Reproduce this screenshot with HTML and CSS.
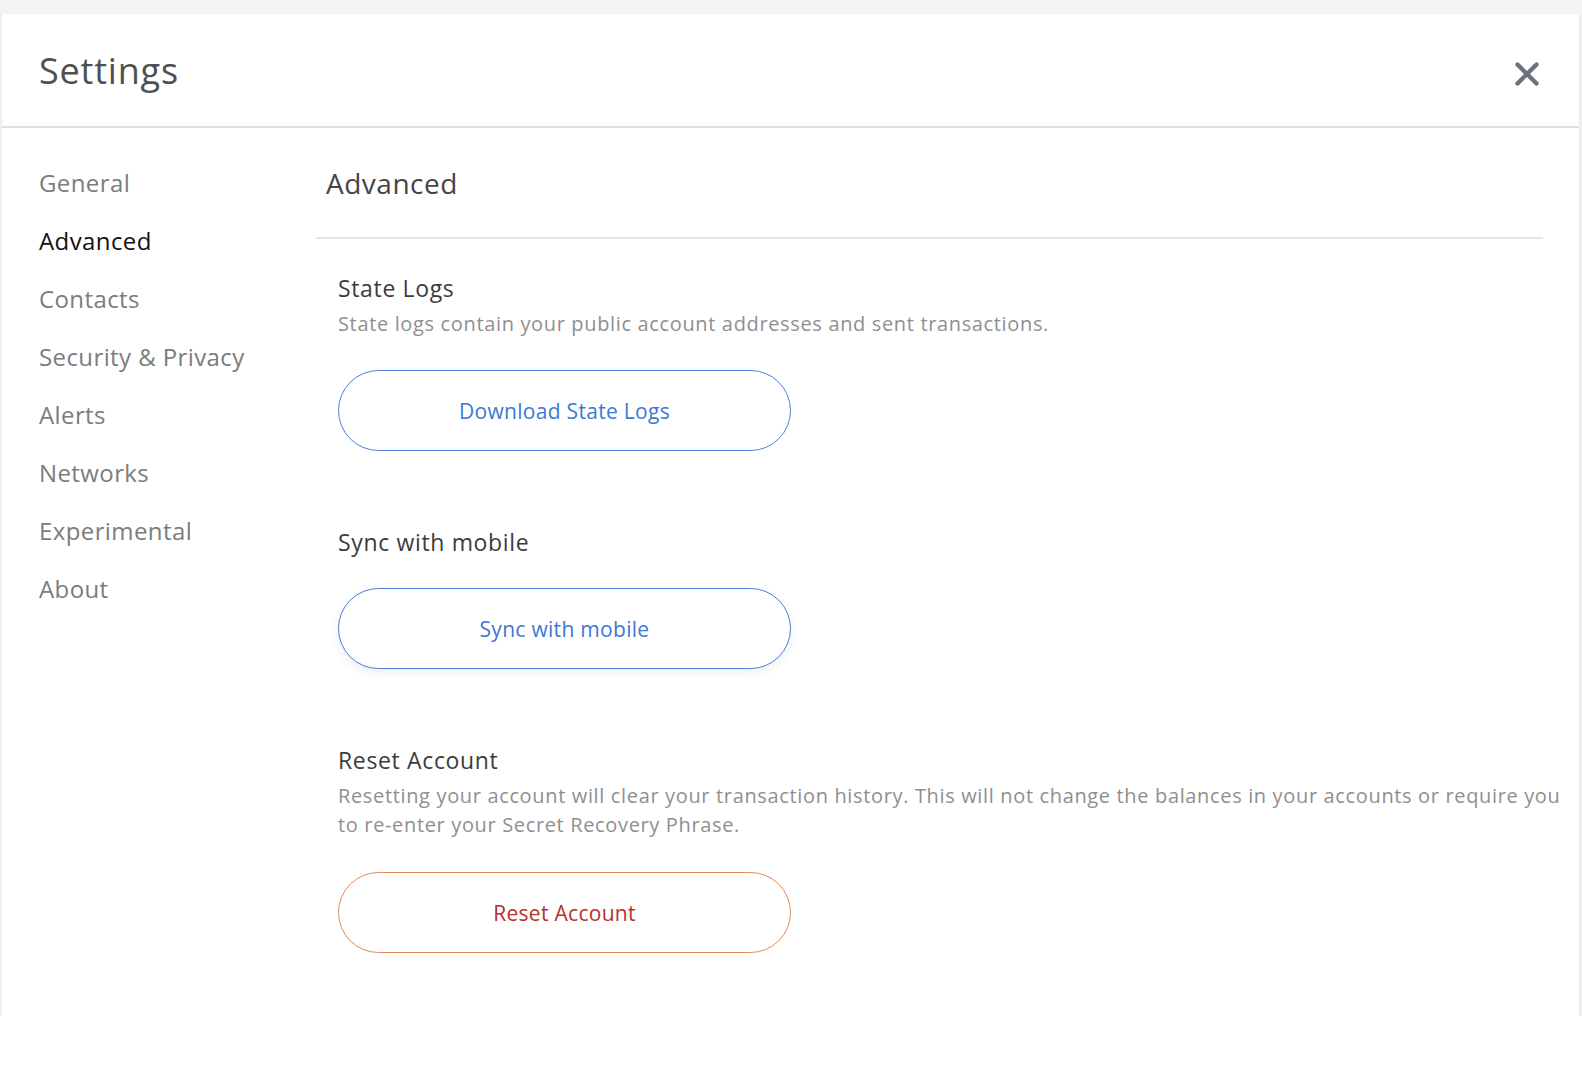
FILE: index.html
```html
<!DOCTYPE html>
<html lang="en">
<head>
<meta charset="utf-8">
<title>Settings</title>
<link rel="stylesheet" href="styles.css">
</head>
<body>
<div class="topband"></div>
<div class="modal">
  <header class="header">
    <h1 class="title">Settings</h1>
    <button class="close" aria-label="Close">
      <svg width="26" height="26" viewBox="0 0 26 26"><path d="M3.5 3.5L22.5 22.5M22.5 3.5L3.5 22.5" stroke="#6a737d" stroke-width="4.4" stroke-linecap="round"/></svg>
    </button>
  </header>
  <div class="main">
    <nav class="sidebar">
      <div class="nav-item">General</div>
      <div class="nav-item active">Advanced</div>
      <div class="nav-item">Contacts</div>
      <div class="nav-item">Security &amp; Privacy</div>
      <div class="nav-item">Alerts</div>
      <div class="nav-item">Networks</div>
      <div class="nav-item">Experimental</div>
      <div class="nav-item">About</div>
    </nav>
    <section class="content">
      <h2 class="content-title">Advanced</h2>
      <div class="divider"></div>
      <div class="section first">
        <div class="sec-title">State Logs</div>
        <div class="sec-desc">State logs contain your public account addresses and sent transactions.</div>
        <button class="btn btn-blue">Download State Logs</button>
      </div>
      <div class="section">
        <div class="sec-title">Sync with mobile</div>
        <button class="btn btn-blue btn-shadow btn-gap">Sync with mobile</button>
      </div>
      <div class="section">
        <div class="sec-title">Reset Account</div>
        <div class="sec-desc">Resetting your account will clear your transaction history. This will not change the balances in your accounts or require you to re-enter your Secret Recovery Phrase.</div>
        <button class="btn btn-red">Reset Account</button>
      </div>
    </section>
  </div>
</div>
</body>
</html>
```
FILE: styles.css
```css
* { box-sizing: border-box; }
html, body { margin: 0; padding: 0; background: #ffffff; }
body { font-family: "Open Sans", Lato, sans-serif; }

.topband { height: 14px; background: #f2f3f4; }

.modal {
  height: 1002px;
  border-left: 2px solid #eeeff0;
  border-right: 3px solid #eeeff0;
  background: #fff;
  display: flex;
  flex-direction: column;
}

.header {
  height: 114px;
  flex: none;
  display: flex;
  align-items: center;
  justify-content: space-between;
  padding: 0 39px 0 37px;
  border-bottom: 2px solid #dedfe0;
}
.title {
  margin: 0;
  font-weight: 400;
  font-size: 36px;
  color: #4f4f4f;
  letter-spacing: 0.8px;
}
.close {
  border: 0;
  background: none;
  padding: 0;
  width: 26px;
  height: 26px;
  cursor: pointer;
  position: relative;
  top: 4px;
}
.close svg { display: block; }

.main { display: flex; flex: 1; min-width: 0; }

.sidebar {
  width: 314px;
  flex: none;
  padding-top: 26px;
  padding-left: 37px;
}
.nav-item {
  height: 58px;
  line-height: 58px;
  font-size: 24px;
  color: #7c7c7c;
  letter-spacing: 0.4px;
}
.nav-item.active { color: #111; }

.content { flex: 1; min-width: 0; padding-top: 37px; }
.content-title {
  margin: 0 0 0 10px;
  font-weight: 400;
  font-size: 28px;
  line-height: 36px;
  color: #454545;
  letter-spacing: 0.5px;
}
.divider { height: 2px; background: #e4e5e6; margin: 36px 36px 0 0; }

.section { padding: 0 10px 0 22px; margin-bottom: 76px; }
.section.first { margin-top: 34px; }

.sec-title {
  font-size: 23px;
  line-height: 30px;
  color: #3c3c3c;
  letter-spacing: 0.65px;
}
.sec-desc {
  margin-top: 6px;
  font-size: 20px;
  line-height: 29px;
  color: #8f8f8f;
  letter-spacing: 0.65px;
}

.btn {
  display: block;
  margin-top: 32px;
  width: 453px;
  height: 81px;
  border-radius: 41px;
  background: #fff;
  font-family: inherit;
  font-size: 21px;
  letter-spacing: 0.3px;
  cursor: pointer;
}
.btn-gap { margin-top: 31px; }
.btn-blue { border: 1.5px solid #4a7fd6; color: #3d78d3; }
.btn-shadow { box-shadow: 0 3px 10px rgba(0,0,0,0.08); }
.btn-red { border: 1.5px solid #e08a58; color: #b5312b; margin-top: 33px; }
```
